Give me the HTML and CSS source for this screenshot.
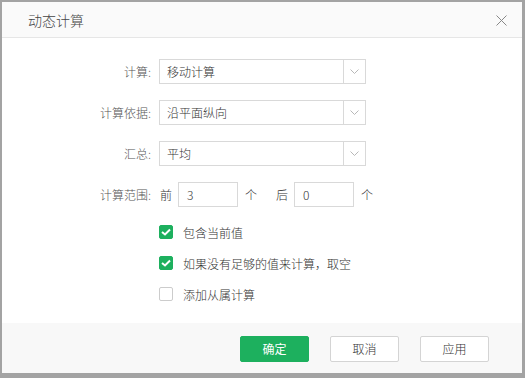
FILE: index.html
```html
<!DOCTYPE html>
<html lang="zh-CN">
<head>
  <meta charset="UTF-8">
  <title>动态计算</title>
  <link rel="stylesheet" href="styles.css">
</head>
<body>

  <div class="dialog">
    <!-- Header -->
    <div class="dialog-header">
      <span class="dialog-title">动态计算</span>
      <span class="close-btn">
        <svg width="11" height="11" viewBox="0 0 11 11"><path d="M0.5 0.5 L10.5 10.5 M10.5 0.5 L0.5 10.5" stroke="#888" stroke-width="1" fill="none"/></svg>
      </span>
    </div>

    <!-- Body -->
    <div class="dialog-body">
      <div class="form-row">
        <label class="form-label">计算:</label>
        <div class="select">
          <span class="select-value">移动计算</span>
          <span class="select-arrow">
            <svg width="9" height="5" viewBox="0 0 9 5"><path d="M0.5 0.5 L4.5 4.5 L8.5 0.5" stroke="#b8b8b8" fill="none"/></svg>
          </span>
        </div>
      </div>

      <div class="form-row">
        <label class="form-label">计算依据:</label>
        <div class="select">
          <span class="select-value">沿平面纵向</span>
          <span class="select-arrow">
            <svg width="9" height="5" viewBox="0 0 9 5"><path d="M0.5 0.5 L4.5 4.5 L8.5 0.5" stroke="#b8b8b8" fill="none"/></svg>
          </span>
        </div>
      </div>

      <div class="form-row">
        <label class="form-label">汇总:</label>
        <div class="select">
          <span class="select-value">平均</span>
          <span class="select-arrow">
            <svg width="9" height="5" viewBox="0 0 9 5"><path d="M0.5 0.5 L4.5 4.5 L8.5 0.5" stroke="#b8b8b8" fill="none"/></svg>
          </span>
        </div>
      </div>

      <div class="form-row">
        <label class="form-label">计算范围:</label>
        <div class="range">
          <span class="range-word">前</span>
          <div class="num-input">3</div>
          <span class="range-unit">个</span>
          <span class="range-word after">后</span>
          <div class="num-input">0</div>
          <span class="range-unit">个</span>
        </div>
      </div>

      <div class="checks">
        <div class="check-row">
          <span class="checkbox checked">
            <svg width="10" height="8" viewBox="0 0 10 8"><path d="M1 4 L4 6.5 L9 1.5" stroke="#fff" stroke-width="2" fill="none"/></svg>
          </span>
          <span>包含当前值</span>
        </div>
        <div class="check-row">
          <span class="checkbox checked">
            <svg width="10" height="8" viewBox="0 0 10 8"><path d="M1 4 L4 6.5 L9 1.5" stroke="#fff" stroke-width="2" fill="none"/></svg>
          </span>
          <span>如果没有足够的值来计算，取空</span>
        </div>
        <div class="check-row">
          <span class="checkbox"></span>
          <span>添加从属计算</span>
        </div>
      </div>
    </div>

    <!-- Footer -->
    <div class="dialog-footer">
      <button class="btn btn-primary">确定</button>
      <button class="btn">取消</button>
      <button class="btn">应用</button>
    </div>
  </div>

</body>
</html>
```

FILE: styles.css
```css
body {
  margin: 0;
  background-color: #a3a3a3;
  font-family: "Noto Sans CJK SC", "Noto Sans", sans-serif;
  font-size: 12px;
  font-weight: 300;
  color: #333;
}
.dialog {
  width: 520px;
  height: 371px;
  margin: 2px 3px 5px 2px;
  background-color: white;
  display: flex;
  flex-direction: column;
}
.dialog-header {
  height: 35px;
  background-color: #fafafa;
  border-bottom: 1px solid #e6e6e6;
  display: flex;
  align-items: center;
  padding: 0 15px 0 26px;
}
.dialog-title {
  flex-grow: 1;
  font-size: 14px;
  color: #444;
}
.close-btn {
  display: flex;
  margin-top: 1px;
}
.dialog-body {
  flex-grow: 1;
  padding-top: 21px;
}
.form-row {
  display: flex;
  align-items: center;
  height: 25px;
  margin-bottom: 16px;
}
.form-label {
  width: 149px;
  text-align: right;
  color: #555;
  margin-right: 8px;
}
.select {
  width: 205px;
  height: 23px;
  border: 1px solid #d9d9d9;
  display: flex;
  align-items: center;
}
.select-value {
  flex-grow: 1;
  padding-left: 7px;
}
.select-arrow {
  width: 21px;
  height: 100%;
  border-left: 1px solid #d9d9d9;
  display: flex;
  align-items: center;
  justify-content: center;
}
.range {
  display: flex;
  align-items: center;
}
.range-word {
  margin: 0 6px 0 1px;
}
.range-word.after {
  margin-left: 19px;
  margin-right: 6px;
}
.range-unit {
  margin-left: 7px;
}
.num-input {
  width: 50px;
  height: 23px;
  line-height: 23px;
  border: 1px solid #d9d9d9;
  padding-left: 8px;
}
.checks {
  padding-left: 157px;
  padding-top: 1px;
}
.check-row {
  display: flex;
  align-items: center;
  height: 16px;
  margin-bottom: 15px;
}
.checkbox {
  width: 14px;
  height: 14px;
  box-sizing: border-box;
  border: 1px solid #ccc;
  border-radius: 2px;
  margin-right: 10px;
  display: flex;
  align-items: center;
  justify-content: center;
}
.checkbox.checked {
  background-color: #1db05e;
  border-color: #1db05e;
}
.dialog-footer {
  height: 50px;
  background-color: #f8f8f8;
  display: flex;
  align-items: center;
  justify-content: flex-end;
  gap: 21px;
  padding-right: 33px;
}
.btn {
  width: 69px;
  height: 26px;
  background-color: white;
  border: 1px solid #d4d4d4;
  border-radius: 2px;
  font-family: "Noto Sans CJK SC", sans-serif;
  font-size: 12px;
  font-weight: 300;
  color: #333;
  padding: 0;
  margin-top: 1px;
}
.btn-primary {
  background-color: #1db05e;
  border-color: #1db05e;
  color: white;
  font-weight: 400;
}
```
